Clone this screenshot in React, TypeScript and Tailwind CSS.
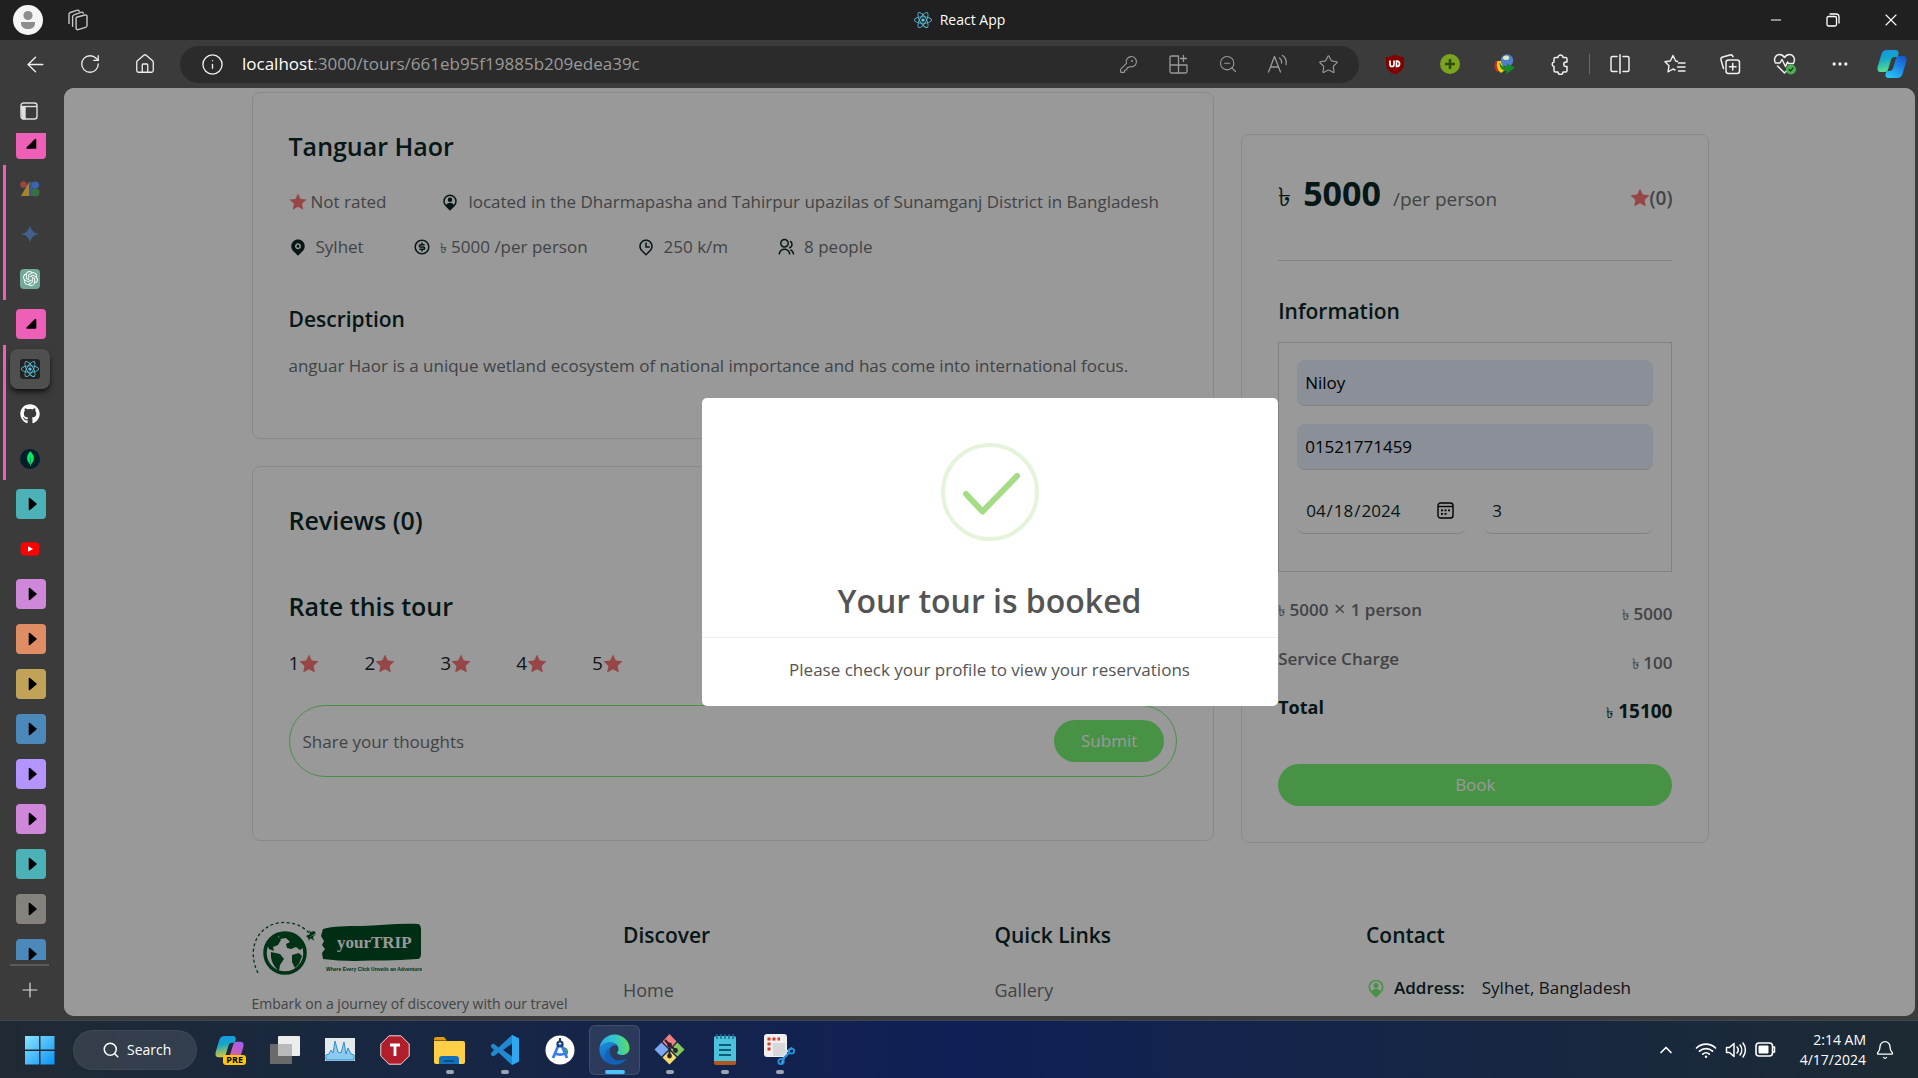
import type { ReactNode } from "react";
import { RiStarFill, RiMapPinFill, RiMoneyDollarCircleLine, RiMapPinTimeLine, RiGroupLine } from "react-icons/ri";
import { FaReact, FaGithub, FaYoutube } from "react-icons/fa";
import { SiOpenai, SiMongodb } from "react-icons/si";
import {
  ArrowLeft, RotateCw, House, Info, KeyRound, ZoomOut, Star, Ellipsis, Minus, X, Plus, Search, Bell, ChevronUp,
} from "lucide-react";

/* ---------- browser chrome ---------- */

function IconButton({ label, className = "", children }: { label: string; className?: string; children: ReactNode }) {
  return (
    <button type="button" aria-label={label} className={`flex h-9 shrink-0 items-center justify-center ${className}`}>
      {children}
    </button>
  );
}

const line = { fill: "none", stroke: "currentColor", strokeLinecap: "round", strokeLinejoin: "round" } as const;

function WorkspacesIcon() {
  return (
    <svg width="22" height="22" viewBox="0 0 22 22" {...line} strokeWidth="1.4">
      <path d="M9.5 8.2 18 6a1.4 1.4 0 0 1 2 1.3v9.2a2 2 0 0 1-1.4 1.8L11 20.6a1.4 1.4 0 0 1-1.9-1.3v-9a2 2 0 0 1 .4-2.1Z" />
      <path d="M5.6 17.2V7.6A2 2 0 0 1 7 5.8L14.600 3.200a1.300 1.300 0 0 1 1.700 1" />
      <path d="M2 14.400V5.300A2 2 0 0 1 3.400 3.500L10.500 1.200a1.300 1.300 0 0 1 1.700 1" />
    </svg>
  );
}

function CopilotIcon({ size = 30, purple = false }: { size?: number; purple?: boolean }) {
  const id = purple ? "cpB" : "cpA";
  return (
    <svg width={size} height={size} viewBox="0 0 30 30">
      <defs>
        <linearGradient id={`${id}l`} x1="0" y1="0" x2="0.200" y2="1">
          <stop offset="0" stopColor="#1b8fe8" />
          <stop offset="0.450" stopColor="#12a9c9" />
          <stop offset="1" stopColor={purple ? "#d8c53a" : "#5fdc8f"} />
        </linearGradient>
        <linearGradient id={`${id}r`} x1="0.800" y1="0" x2="0.200" y2="1">
          <stop offset="0" stopColor={purple ? "#a55cf0" : "#1557d6"} />
          <stop offset="1" stopColor={purple ? "#f4607a" : "#27c5f5"} />
        </linearGradient>
      </defs>
      <path d="M10 1h8.500c2.500 0 3.500 2 3 4l-1 3h-3c-2 0-3 1-3.600 3l-2.700 9c-.6 2-1.700 3-3.700 3H4c-3 0-4-2-3.400-5L4.500 5C5.300 2.300 7 1 10 1Z" fill={`url(#${id}l)`} />
      <path d="M20 29h-8.500c-2.500 0-3.500-2-3-4l1-3h3c2 0 3-1 3.600-3l2.700-9c.6-2 1.700-3 3.700-3H26c3 0 4 2 3.400 5L25.500 25c-.8 2.700-2.500 4-5.500 4Z" fill={`url(#${id}r)`} />
    </svg>
  );
}

function TitleBar() {
  return (
    <header className="flex h-10 shrink-0 items-center bg-[#202020] pl-[13px] text-white">
      <div className="flex flex-1 items-center gap-6">
        <button type="button" aria-label="Profile" className="size-[30px] rounded-full bg-[#f5f5f5]">
          <svg viewBox="0 0 30 30" fill="#8d8d8d">
            <circle cx="15" cy="10.500" r="4.600" />
            <path d="M8 17h14v1.500c0 3.500-3 5.500-7 5.500s-7-2-7-5.500Z" />
          </svg>
        </button>
        <button type="button" aria-label="Workspaces" className="text-[#c8c8c8]"><WorkspacesIcon /></button>
      </div>
      <div className="flex items-center gap-2 pr-3 text-[14px] leading-5">
        <FaReact size={18} color="#61c9e8" />
        <span>React App</span>
      </div>
      <div className="flex flex-1 items-center justify-end">
        <IconButton label="Minimize" className="w-[52px]"><Minus size={16} strokeWidth={1.5} /></IconButton>
        <IconButton label="Restore" className="w-[62px]">
          <svg width="14" height="14" viewBox="0 0 14 14" {...line} strokeWidth="1.300">
            <rect x="1" y="3.500" width="9.500" height="9.500" rx="1.500" />
            <path d="M4 1h6a3 3 0 0 1 3 3v6" />
          </svg>
        </IconButton>
        <IconButton label="Close" className="w-[54px]"><X size={20} strokeWidth={1.3} /></IconButton>
      </div>
    </header>
  );
}

function Toolbar() {
  return (
    <div className="flex h-12 shrink-0 items-center bg-[#3b3b3b] pr-px pl-2 text-[#f0f0f0]">
      <IconButton label="Back" className="w-[54px]"><ArrowLeft size={25} strokeWidth={1.3} /></IconButton>
      <IconButton label="Refresh" className="w-[55px]"><RotateCw size={22} strokeWidth={1.4} /></IconButton>
      <IconButton label="Home" className="w-[55px]"><House size={22} strokeWidth={1.4} /></IconButton>
      <div className="ml-2 flex h-[37px] flex-1 items-center rounded-full bg-[#2b2b2b] pr-[6px] pl-[21px]">
        <Info size={23} strokeWidth={1.4} />
        <p className="ml-[18px] flex-1 text-[17px] leading-6 text-[#9a9a9a]">
          <span className="text-white">localhost</span>:3000/tours/661eb95f19885b209edea39c
        </p>
        <div className="flex items-center text-[#9a9a9a]">
          <IconButton label="Saved password" className="w-[50px]"><KeyRound size={19} strokeWidth={1.4} /></IconButton>
          <IconButton label="Install app" className="w-[50px]">
            <svg width="21" height="21" viewBox="0 0 21 21" {...line} strokeWidth="1.300">
              <path d="M10 2H3.500A1.500 1.500 0 0 0 2 3.500v14A1.500 1.500 0 0 0 3.500 19h14a1.500 1.500 0 0 0 1.500-1.500V11H2M10.500 2v17M15.500 1.500v6M12.500 4.500h6" />
            </svg>
          </IconButton>
          <IconButton label="Zoom out" className="w-[50px]"><ZoomOut size={20} strokeWidth={1.3} /></IconButton>
          <IconButton label="Read aloud" className="w-[50px]">
            <svg width="22" height="20" viewBox="0 0 22 20" {...line} strokeWidth="1.300">
              <path d="m1.500 18 6-15.500 6 15.500M3.600 13h7.800M12.500 4a5 5 0 0 1 2 5M15.500 1.500a9 9 0 0 1 3.500 9" />
            </svg>
          </IconButton>
          <IconButton label="Add to favourites" className="w-[50px]"><Star size={21} strokeWidth={1.300} /></IconButton>
        </div>
      </div>
      <div className="ml-2 flex items-center">
        <IconButton label="uBlock Origin" className="w-[55px]">
          <svg width="20" height="21" viewBox="0 0 20 21">
            <path d="M10 .5c2.500 1.700 5.500 2.500 9 2.500v7c0 5-4 8.500-9 10.500C5 18.500 1 15 1 10V3c3.500 0 6.500-.8 9-2.500Z" fill="#800000" />
            <path d="M5 6.500v4a2 2 0 0 0 4 0v-4M11.500 7v5.500h.8a2.800 2.800 0 0 0 0-5.500Z" fill="none" stroke="#fff" strokeWidth="1.700" />
          </svg>
        </IconButton>
        <IconButton label="Add extension" className="w-[55px]">
          <svg width="20" height="20" viewBox="0 0 20 20">
            <circle cx="10" cy="10" r="10" fill="#7ba41c" />
            <path d="M10 5v10M5 10h10" stroke="#2f4a08" strokeWidth="2.600" />
          </svg>
        </IconButton>
        <IconButton label="Download manager" className="w-[55px]">
          <svg width="22" height="20" viewBox="0 0 22 20">
            <path d="M2 7C0 10 0 15 3 18l3-2-2-8Z" fill="#d9261c" />
            <path d="M3.500 7C2 11 3 16 7 19l4-3-4-9Z" fill="#f3cf1b" />
            <circle cx="13" cy="6.500" r="6.200" fill="#4f7fc8" />
            <path d="M9 3c2-2 5-2 6 0s-1 3-3 3-4-1-3-3Z" fill="#dbe8c0" />
            <path d="M5.500 8c1.500 4 4 5.500 7.500 4.500V9.500l8 4L12.500 20v-3C8 17 5 13 5.500 8Z" fill="#1c8a26" />
          </svg>
        </IconButton>
        <IconButton label="Extensions" className="w-[55px]">
          <svg width="22" height="22" viewBox="0 0 22 22" {...line} strokeWidth="1.500">
            <path d="M6.500 4.500H9a2.500 2.500 0 1 1 5 0h2.500a1.500 1.500 0 0 1 1.500 1.500v3h-1a2.200 2.200 0 1 0 0 4.500h1v4a1.500 1.500 0 0 1-1.500 1.500H14a2.500 2.500 0 0 1-5 0H6.500A1.500 1.500 0 0 1 5 17.500v-4a2.300 2.300 0 0 1 0-4.500V6a1.500 1.500 0 0 1 1.500-1.500Z" />
          </svg>
        </IconButton>
        <div className="mx-[2px] h-5 w-px bg-[#6a6a6a]" />
        <IconButton label="Split screen" className="w-[55px]">
          <svg width="22" height="20" viewBox="0 0 22 20" {...line} strokeWidth="1.500">
            <path d="M8 2.500H3.500A1.500 1.500 0 0 0 2 4v12a1.500 1.500 0 0 0 1.500 1.500H8M14 2.500h4.500A1.500 1.500 0 0 1 20 4v12a1.500 1.500 0 0 1-1.500 1.500H14M11 .8v18.400" />
          </svg>
        </IconButton>
        <IconButton label="Favourites" className="w-[55px]">
          <svg width="22" height="20" viewBox="0 0 22 20" {...line} strokeWidth="1.400">
            <path d="M13.500 7.500 11.700 7 9 1.500 6.300 7 1 7.800l4 4-1 6L9 15l2 1M14.500 9h6.500M13.500 13h7.500M14.500 17h6.500" />
          </svg>
        </IconButton>
        <IconButton label="Collections" className="w-[55px]">
          <svg width="22" height="22" viewBox="0 0 22 22" {...line} strokeWidth="1.500">
            <rect x="7" y="7" width="13.500" height="13.500" rx="2.500" />
            <path d="M13.700 10.500v6.500M10.500 13.700h6.500M4.500 15.500 2 7a2.500 2.500 0 0 1 1.700-3L11 2a2.500 2.500 0 0 1 3 1.700" />
          </svg>
        </IconButton>
        <IconButton label="Browser essentials" className="w-[55px]">
          <svg width="24" height="22" viewBox="0 0 24 22" {...line} strokeWidth="1.500">
            <path d="M2.500 10C0 5.500 3 1.500 6.500 1.500c2.500 0 4 1.500 5 3 1-1.500 2.500-3 5-3 3.500 0 6.500 4 4 8.500M4.500 13l7 7 2-2M2.500 10H7l2-3.500 3.500 7L14.500 9l1 1.500h5" />
            <circle cx="18" cy="16.500" r="5" fill="#4caf50" stroke="none" />
            <path d="m16 16.500 1.500 1.500 2.500-3" stroke="#1d3b1e" strokeWidth="1.200" />
          </svg>
        </IconButton>
        <IconButton label="Settings and more" className="w-[55px]"><Ellipsis size={20} strokeWidth={2} /></IconButton>
        <IconButton label="Copilot" className="w-[50px]"><CopilotIcon /></IconButton>
      </div>
    </div>
  );
}

/* ---------- vertical tabs ---------- */

function Slot({ children }: { children: ReactNode }) {
  return <div className="flex h-[45px] w-full shrink-0 items-center justify-center pr-[2px]">{children}</div>;
}

function GroupTile({ color, open = false }: { color: string; open?: boolean }) {
  return (
    <div className="flex h-[45px] w-full shrink-0 items-center justify-center">
      <button type="button" aria-label="Tab group" className={`flex size-[30px] items-center justify-center rounded-[4px] ${color}`}>
        <svg width="14" height="16" viewBox="0 0 14 16" fill="#000" stroke="#000" strokeWidth="1.600" strokeLinejoin="round">
          {open ? <path d="M11.500 3.500v8.500H3Z" /> : <path d="M5.500 2.500v11L12 8Z" />}
        </svg>
      </button>
    </div>
  );
}

function TabGroup({ children }: { children: ReactNode }) {
  return (
    <div className="relative w-full shrink-0">
      <div className="absolute inset-y-0 left-[3px] w-[3px] -translate-y-px bg-[#ee5fb7]" />
      {children}
    </div>
  );
}

function TabStrip() {
  return (
    <nav aria-label="Tabs" className="flex w-16 shrink-0 flex-col bg-[#3b3b3b]">
      <div className="flex h-[45px] shrink-0 items-center justify-center pr-[6px]">
        <svg width="18" height="18" viewBox="0 0 18 18" fill="none" stroke="#dedede" strokeWidth="1.400">
          <rect x="1" y="1" width="16" height="16" rx="2.500" />
          <path d="M1 4.500h16" />
          <path d="M1.500 5h3.500v11.500H2.500z" fill="#dedede" />
        </svg>
      </div>
      <div className="flex min-h-0 flex-1 basis-0 flex-col overflow-hidden">
        <div className="-mt-3 flex flex-col pr-[2px]">
          <GroupTile color="bg-[#ee5fb7]" open />
          <TabGroup>
            <Slot>
              <svg width="20" height="16" viewBox="0 0 20 16">
                <circle cx="3.500" cy="3.500" r="3.200" fill="#9c4541" />
                <path d="M1 15 9 1v14Z" fill="#a8842c" />
                <path d="M9 1h5a3.500 3.500 0 0 1 2 6.500V15H9Z" fill="#34599c" />
                <circle cx="15.500" cy="4" r="3.500" fill="#3a64ad" />
                <circle cx="15.500" cy="11.500" r="4" fill="#39703f" />
              </svg>
            </Slot>
            <Slot>
              <svg width="18" height="18" viewBox="0 0 18 18">
                <path d="M9 0c.7 5 4 8.300 9 9-5 .7-8.300 4-9 9-.7-5-4-8.300-9-9 5-.7 8.300-4 9-9Z" fill="#40608e" />
              </svg>
            </Slot>
            <Slot>
              <span className="flex size-5 items-center justify-center rounded-[4px] bg-[#72a99a]"><SiOpenai size={15} color="#fff" /></span>
            </Slot>
          </TabGroup>
          <GroupTile color="bg-[#ee5fb7]" open />
          <TabGroup>
            <Slot>
              <span className="flex size-10 items-center justify-center rounded-lg bg-[#4f4f4f] shadow-md shadow-black/60">
                <span className="flex size-5 items-center justify-center rounded-[3px] bg-[#222]"><FaReact size={18} color="#61c9e8" /></span>
              </span>
            </Slot>
            <Slot><FaGithub size={20} color="#fff" /></Slot>
            <Slot>
              <span className="flex size-5 items-center justify-center rounded-full bg-[#001e2b]"><SiMongodb size={15} color="#00ed64" /></span>
            </Slot>
          </TabGroup>
          <GroupTile color="bg-[#4bb3b8]" />
          <Slot>
            <span className="relative flex items-center justify-center">
              <span className="absolute size-2 bg-white" />
              <FaYoutube size={20} color="#f00" className="relative" />
            </span>
          </Slot>
          <GroupTile color="bg-[#cf87da]" />
          <GroupTile color="bg-[#df8e64]" />
          <GroupTile color="bg-[#c0a356]" />
          <GroupTile color="bg-[#4a89ba]" />
          <GroupTile color="bg-[#b495ff]" />
          <GroupTile color="bg-[#cf87da]" />
          <GroupTile color="bg-[#4bb3b8]" />
          <GroupTile color="bg-[#85817d]" />
          <GroupTile color="bg-[#4a89ba]" />
        </div>
      </div>
      <div className="flex flex-col pr-[5px] pb-[6px]">
        <div className="mx-[10px] mt-1 h-[2px] bg-[#5a5a5a]" />
        <button type="button" aria-label="New tab" className="flex h-[48px] items-center justify-center text-[#dedede]">
          <Plus size={24} strokeWidth={1.200} />
        </button>
      </div>
    </nav>
  );
}

/* ---------- tour page ---------- */

const card = "rounded-lg border border-[#e5e5e5] px-9";
const heading = "font-semibold text-[#0b2727]";

function PinUserIcon({ size = 18 }: { size?: number }) {
  return (
    <svg width={size} height={size} viewBox="0 0 24 24" fill="currentColor">
      <path d="M17.084 15.812a7 7 0 1 0-10.168 0A5.996 5.996 0 0 1 12 13a5.996 5.996 0 0 1 5.084 2.812zM12 23.728l-6.364-6.364a9 9 0 1 1 12.728 0L12 23.728zM12 12a3 3 0 1 1 0-6 3 3 0 0 1 0 6z" />
    </svg>
  );
}

function Meta({ icon, children }: { icon: ReactNode; children: ReactNode }) {
  return (
    <span className="flex items-center gap-[9px]">
      <span className="text-[#0b2727]">{icon}</span>
      {children}
    </span>
  );
}

function Taka({ className = "text-[15px]" }: { className?: string }) {
  return <span className={`leading-none font-normal ${className}`}>৳</span>;
}

function TourInfo() {
  return (
    <section className={`${card} pt-[35px] pb-[58px] text-[17px] text-[#6e7074]`}>
      <h2 className={`${heading} text-[25px] leading-9`}>Tanguar Haor</h2>
      <div className="mt-[25px] flex h-[25px] items-center gap-[55px]">
        <span className="flex items-center gap-1"><RiStarFill size={18} color="#fa7575" />Not rated</span>
        <Meta icon={<PinUserIcon />}>
          located in the Dharmapasha and Tahirpur upazilas of Sunamganj District in Bangladesh
        </Meta>
      </div>
      <div className="mt-5 flex h-[25px] items-center gap-[49px]">
        <Meta icon={<RiMapPinFill size={18} />}>Sylhet</Meta>
        <Meta icon={<RiMoneyDollarCircleLine size={18} />}><span><Taka className="text-[14px]" /> 5000 /per person</span></Meta>
        <Meta icon={<RiMapPinTimeLine size={18} />}>250 k/m</Meta>
        <Meta icon={<RiGroupLine size={18} />}>8 people</Meta>
      </div>
      <h3 className={`${heading} mt-[46px] text-[21px] leading-7`}>Description</h3>
      <p className="mt-[19px] leading-7">
        anguar Haor is a unique wetland ecosystem of national importance and has come into international focus.
      </p>
    </section>
  );
}

function Reviews() {
  return (
    <section className={`${card} mt-[27px] pt-[35px] pb-[63px]`}>
      <h2 className={`${heading} text-[25px] leading-9`}>Reviews (0)</h2>
      <form>
        <h3 className={`${heading} mt-[50px] text-[25px] leading-9`}>Rate this tour</h3>
        <div className="mt-[26px] flex items-center gap-[45px] text-[19px] leading-[27px] text-[#212529]">
          {[1, 2, 3, 4, 5].map((n) => (
            <button type="button" key={n} aria-label={`${n} star`} className="flex items-center">
              {n}<RiStarFill size={20} color="#fa7575" />
            </button>
          ))}
        </div>
        <div className="mt-7 flex h-[72px] items-center rounded-full border border-[#78f375] pr-3 pl-[13px]">
          <input
            type="text" aria-label="Share your thoughts" placeholder="Share your thoughts"
            className="h-full min-w-0 flex-1 bg-transparent text-[17px] text-[#212529] outline-none placeholder:text-[#6e7074]"
          />
          <button type="submit" className="h-[42px] w-[110px] rounded-full bg-[#78f375] text-[17px] text-white">Submit</button>
        </div>
      </form>
    </section>
  );
}

const field = "h-[46px] w-full min-w-0 rounded-lg border-b border-[#d8d8d8] px-2 text-[17px] outline-none";

function Booking() {
  return (
    <aside className={`${card} mt-[42px] pt-9 pb-9`}>
      <div className="flex h-[54px] items-start justify-between">
        <p className="flex items-baseline gap-3 leading-[44px] text-[#0b2727]">
          <span className="flex items-baseline gap-3 text-[34px] font-bold"><Taka className="text-[26px]" />5000</span>
          <span className="text-[19px] text-[#6e7074]">/per person</span>
        </p>
        <span className="flex items-center text-[19px] leading-[54px] font-semibold text-[#6e7074]"><RiStarFill size={20} color="#fa7575" />(0)</span>
      </div>
      <form>
        <h3 className={`${heading} mt-[35px] border-t border-[#d8d8d8] pt-9 text-[21px] leading-7`}>Information</h3>
        <div className="mt-[17px] grid grid-cols-2 gap-[18px] border border-[#d8d8d8] px-[18px] pt-[17px] pb-[37px]">
          <input aria-label="Full name" type="text" defaultValue="Niloy" className={`${field} col-span-2 bg-[#e8f0fe] text-black`} />
          <input aria-label="Phone" type="tel" defaultValue="01521771459" className={`${field} col-span-2 bg-[#e8f0fe] text-black`} />
          <div className="relative">
            <input
              aria-label="Date" type="date" defaultValue="2024-04-18"
              className={`${field} text-[#0b2727] [&::-webkit-calendar-picker-indicator]:opacity-0 [&::-webkit-datetime-edit-fields-wrapper]:p-0`}
            />
            <svg className="pointer-events-none absolute top-[14px] right-3" width="17" height="17" viewBox="0 0 17 17" fill="none" stroke="#000" strokeWidth="1.400">
              <rect x="1" y="1" width="15" height="15" rx="2.500" />
              <path d="M1 4.500h15" />
              <path d="M4 8.300h2m1.500 0h2m1.500 0h2M4 11.800h2m1.500 0h2" strokeWidth="1.800" />
            </svg>
          </div>
          <input aria-label="Guests" type="text" inputMode="numeric" defaultValue="3" className={`${field} text-[#0b2727]`} />
        </div>
      </form>
      <dl className="mt-[25px] flex flex-col gap-6 text-[17px] font-semibold text-[#6e7074]">
        <div className="flex h-[25px] justify-between leading-[25px]">
          <dt><Taka /> 5000 <span className="px-px text-[20px] leading-none font-normal">×</span> 1 person</dt>
          <dd className="pt-1"><Taka /> 5000</dd>
        </div>
        <div className="flex h-[25px] justify-between leading-[25px]">
          <dt>Service Charge</dt>
          <dd className="pt-1"><Taka /> 100</dd>
        </div>
        <div className="flex h-[25px] justify-between text-[19px] leading-[25px] font-bold text-[#0b2727]">
          <dt className="text-[18px]">Total</dt>
          <dd className="pt-1"><Taka /> 15100</dd>
        </div>
      </dl>
      <button type="button" className="mt-11 h-[42px] w-full rounded-full bg-[#78f375] text-[17px] text-white">Book</button>
    </aside>
  );
}

function Logo() {
  return (
    <svg role="img" aria-label="yourTRIP" width="170" height="54" viewBox="0 0 170 54">
      <path d="M6 52C-4 32 2 10 22 3c13-4 27 0 35 9" fill="none" stroke="#005426" strokeWidth="1.300" strokeDasharray="3 2.500" />
      <path d="m56 17 8-5-2-2-3 1-2-2 1 4-4 2 2 2 1 3 1-3Zm0 0 4 1 2 2-1-4 3-3" fill="#005426" />
      <circle cx="33" cy="32" r="20" fill="#fff" stroke="#005426" strokeWidth="3.500" />
      <path d="M33 12c9 0 17 6 19 14l-4 3-4-3-5 2-4-1-1-4 4-2-4-4-6 1-2-5 7-1ZM15 23c2-4 6-8 10-9l4 5-3 5-5 2 1 4-5-2ZM19 31l9 2 4 5-4 6-1 6c-5-4-9-11-8-19Zm21 3 7-2 3 3-3 8-4 4-3-6Z" fill="#005426" />
      <path d="M71 8c10-3 24-3 38-3 18 0 36-3 57-2 2 0 3 3 3 6v23c0 4-1 6-4 6-22 2-42 1-62 2-12 0-22-1-32-2l-1-6 3-4-3-4 2-4-3-5Z" fill="#004d22" />
      <text x="85" y="27" fontFamily="'Liberation Serif', serif" fontWeight="700" fontSize="17" fill="#fff">yourTRIP</text>
      <text x="74" y="50" fontFamily="'Liberation Sans', sans-serif" fontWeight="700" fontSize="5" fill="#005426">Where Every Click Unveils an Adventure</text>
    </svg>
  );
}

function Footer() {
  const title = `${heading} text-[21px] leading-7`;
  return (
    <footer className="mt-[78px] flex">
      <div className="w-1/4 px-[14px]">
        <Logo />
        <p className="mt-[19px] text-[14px] leading-5 text-[#6e7074]">Embark on a journey of discovery with our travel</p>
      </div>
      <div className="w-1/4 px-[14px]">
        <h4 className={title}>Discover</h4>
        <a href="#home" className="mt-[27px] block text-[18px] leading-7 text-[#6e7074]">Home</a>
      </div>
      <div className="w-1/4 px-[14px]">
        <h4 className={title}>Quick Links</h4>
        <a href="#gallery" className="mt-[27px] block text-[18px] leading-7 text-[#6e7074]">Gallery</a>
      </div>
      <div className="w-1/4 px-[14px]">
        <h4 className={title}>Contact</h4>
        <p className="mt-[25px] flex items-center text-[17px] leading-7 text-[#212529]">
          <span className="text-[#78f375]"><PinUserIcon size={20} /></span>
          <span className="ml-2 font-semibold text-[#0b2727]">Address:</span>
          <span className="ml-[17px]">Sylhet, Bangladesh</span>
        </p>
      </div>
    </footer>
  );
}

function BookedDialog() {
  return (
    <div className="absolute inset-0 flex items-center justify-center bg-black/40">
      <div role="dialog" aria-labelledby="booked-title" className="w-full max-w-[576px] rounded-[5px] bg-white pt-[45px] text-center text-[#545454]">
        <svg className="mx-auto" width="98" height="98" viewBox="0 0 98 98" fill="none">
          <circle cx="49" cy="49" r="47" stroke="#a5dc86" strokeOpacity="0.300" strokeWidth="4" />
          <path d="m25 51 16.500 17.500L76 33" stroke="#a5dc86" strokeWidth="6" strokeLinecap="round" strokeLinejoin="round" />
        </svg>
        <h2 id="booked-title" className="mt-10 border-b border-[#eee] pb-4 text-[32px] leading-10 font-semibold">Your tour is booked</h2>
        <p className="pt-5 pb-6 text-[17px] leading-6">Please check your profile to view your reservations</p>
      </div>
    </div>
  );
}

function TourPage() {
  return (
    <main className="relative mr-[3px] mb-1 flex-1 overflow-hidden rounded-[10px] bg-white">
      <div className="h-full overflow-hidden pt-1 pr-[18px]">
        <div className="mx-auto max-w-[1486px]">
          <div className="flex items-start">
            <div className="w-2/3 px-[14px]">
              <TourInfo />
              <Reviews />
            </div>
            <div className="w-1/3 pr-[14px] pl-[13px]">
              <Booking />
            </div>
          </div>
          <Footer />
        </div>
      </div>
      <BookedDialog />
    </main>
  );
}

/* ---------- taskbar ---------- */

function TaskItem({ label, state = "idle", children }: { label: string; state?: "idle" | "running" | "active"; children: ReactNode }) {
  return (
    <button
      type="button" aria-label={label}
      className={`relative mx-[2px] flex h-[50px] w-[51px] items-center justify-center rounded-md border ${state === "active" ? "border-white/10 bg-white/10" : "border-transparent"}`}
    >
      {children}
      {state === "running" && <span className="absolute bottom-0 h-1 w-2 rounded-full bg-[#9ea4b2]" />}
      {state === "active" && <span className="absolute bottom-0 h-1 w-5 rounded-full bg-[#4cc2ff]" />}
    </button>
  );
}

function Taskbar() {
  return (
    <footer className="flex h-[58px] shrink-0 items-center border-t border-[#3c4656] bg-linear-to-r from-[#1f2a33] via-[#101f55] to-[#1d2a33] pr-[23px] pl-3 text-white">
      <TaskItem label="Start">
        <svg width="30" height="30" viewBox="0 0 30 30">
          <defs>
            <linearGradient id="win" x1="0" y1="0" x2="1" y2="1"><stop stopColor="#8be4ff" /><stop offset="1" stopColor="#0a93f5" /></linearGradient>
          </defs>
          <path d="M0 1h14v13.500H0zM15.500 1h14v13.500h-14zM0 16h14v13.500H0zM15.500 16h14v13.500h-14z" fill="url(#win)" />
        </svg>
      </TaskItem>
      <button type="button" className="mr-[5px] ml-[6px] flex h-10 w-[124px] items-center gap-[7px] rounded-full border border-white/5 bg-white/10 pl-7 text-[14px]">
        <Search size={18} strokeWidth={2} />Search
      </button>
      <TaskItem label="Copilot preview">
        <span className="relative">
          <CopilotIcon size={29} purple />
          <span className="absolute -right-[2px] -bottom-[1px] rounded-[3px] bg-[#fdc60b] px-[3px] text-[9px] leading-[10px] font-bold text-black">PRE</span>
        </span>
      </TaskItem>
      <TaskItem label="Task view">
        <svg width="30" height="28" viewBox="0 0 30 28">
          <rect x="8" y="0" width="22" height="20" rx="1" fill="#ededed" />
          <rect x="0" y="8" width="22" height="20" rx="1" fill="#6a6a6a" />
          <path d="M8 8h14v12H8z" fill="#b9b9b9" />
        </svg>
      </TaskItem>
      <TaskItem label="Resource monitor">
        <svg width="30" height="23" viewBox="0 0 30 23">
          <rect width="30" height="23" fill="#e4e9ee" />
          <path d="M1 22v-5l3-1 2-4 2 3 2-12 3 11 3 1 3-11 2 12 2-6 3 6 3 1v5Z" fill="#8ccbf0" stroke="#2f8fc8" />
        </svg>
      </TaskItem>
      <TaskItem label="Thorium">
        <svg width="30" height="30" viewBox="0 0 30 30">
          <path d="M9 .8h12L29.200 9v12L21 29.200H9L.8 21V9Z" fill="#b01e2c" stroke="#f1d7d9" />
          <path d="M10 10h10M15 10v11" stroke="#fff" strokeWidth="2.800" />
        </svg>
      </TaskItem>
      <TaskItem label="File Explorer" state="running">
        <svg width="31" height="28" viewBox="0 0 31 28">
          <path d="M0 3a2 2 0 0 1 2-2h8l3 3.500H0Z" fill="#e09a10" />
          <path d="M0 5h29a2 2 0 0 1 2 2v19a2 2 0 0 1-2 2H2a2 2 0 0 1-2-2Z" fill="#ffcf48" />
          <path d="M5 28v-5a3 3 0 0 1 3-3h14a3 3 0 0 1 3 3v5Z" fill="#1272bd" />
          <path d="M10 25h10" stroke="#0b4f8a" strokeWidth="2" />
        </svg>
      </TaskItem>
      <TaskItem label="Visual Studio Code" state="running">
        <svg width="30" height="30" viewBox="0 0 30 30">
          <path d="m22 0 7 3.500v23L22 30 8.500 17.500 3.500 21.500 1 20V18l3-3-3-3v-2l2.500-1.500 5 4Zm0 8.500L13 15l9 6.500Z" fill="#1f8ad2" fillRule="evenodd" />
          <path d="m22 0 7 3.500v23L22 30Z" fill="#2ea8f0" />
        </svg>
      </TaskItem>
      <TaskItem label="Android Studio">
        <svg width="30" height="30" viewBox="0 0 30 30">
          <circle cx="15" cy="15" r="14.500" fill="#fff" />
          <path d="M19 12a5 5 0 0 1 3 8l-3-2Z" fill="#37a055" />
          <path d="m14 9-6 14M16 9l6 14M9.500 18.500c4 1.500 7 1.500 11 0" fill="none" stroke="#3b7ded" strokeWidth="2.800" />
          <circle cx="15" cy="9" r="2.600" fill="none" stroke="#163a6b" strokeWidth="2" />
          <path d="M15 3v4" stroke="#163a6b" strokeWidth="2" />
        </svg>
      </TaskItem>
      <TaskItem label="Microsoft Edge" state="active">
        <svg width="31" height="31" viewBox="0 0 31 31">
          <defs>
            <linearGradient id="edgeTop" x1="0" y1="0.500" x2="1" y2="0.400"><stop stopColor="#2aa6e8" /><stop offset="0.500" stopColor="#2fc6cf" /><stop offset="1" stopColor="#60dd5c" /></linearGradient>
            <linearGradient id="edgeLow" x1="0" y1="0" x2="0.600" y2="1"><stop stopColor="#1d8fe0" /><stop offset="1" stopColor="#0d56a8" /></linearGradient>
          </defs>
          <path d="M.5 14C1.500 6 8 .5 15.500.5 24 .5 30.500 7 30.500 14c0 4.500-3.500 7-7.500 7-3 0-5-1.200-5-2.200 0-.8 1.500-1.300 1.500-4 0-3-3-6.300-8-6.300C6.500 8.500 2.500 11 .5 14Z" fill="url(#edgeTop)" />
          <path d="M.5 14C2 10.500 6 8.500 11 8.500c3 0 5.500 1.200 7 3-5-1.500-7.500 2.500-7.500 6 0 6 6 9.500 11 9 3-.3 5-1.500 6.500-2.500-3 4.500-7.500 6.500-12.500 6.500C7 30.500-.5 24 .5 14Z" fill="url(#edgeLow)" />
          <path d="M11.500 30C5 27 4.500 17 12.500 12c-3 3-2.500 8 .5 11.500 4 4.500 11 4 15 .8-4 6-10 7.200-16.500 5.700Z" fill="#1560b8" />
        </svg>
      </TaskItem>
      <TaskItem label="Git" state="running">
        <svg width="31" height="31" viewBox="0 0 31 31">
          <path d="m15.500 0 7 7.500-7 7.500-7-7.500Z" fill="#f08080" />
          <path d="m7.500 8.500 7 7-7 7-7-7Z" fill="#7ba9f0" />
          <path d="m23.500 8.500 7 7-7 7-7-7Z" fill="#84c65a" />
          <path d="m15.500 16.500 7 7-7 7-7-7Z" fill="#f3dc6b" />
          <path d="m11 6 4.500 5v12M15.500 11l6 5" stroke="#2b2035" strokeWidth="2" fill="none" />
          <circle cx="15.500" cy="11" r="2.400" fill="#2b2035" /><circle cx="21.500" cy="16.500" r="2.400" fill="#2b2035" /><circle cx="15.500" cy="22" r="2.400" fill="#2b2035" />
        </svg>
      </TaskItem>
      <TaskItem label="Notepad" state="running">
        <svg width="24" height="31" viewBox="0 0 24 31">
          <rect x="1" y="2" width="22" height="27" rx="2" fill="#4cc3dc" />
          <path d="M1 27h22v2a2 2 0 0 1-2 2H3a2 2 0 0 1-2-2Z" fill="#b5571c" />
          <path d="M4 0v5M8 0v5M12 0v5M16 0v5M20 0v5" stroke="#1d6f8c" strokeWidth="1.500" />
          <path d="M6 11h12M6 16h12M6 21h12" stroke="#0d5a78" strokeWidth="2" />
        </svg>
      </TaskItem>
      <TaskItem label="Snipping Tool" state="running">
        <svg width="31" height="31" viewBox="0 0 31 31">
          <rect width="23" height="23" rx="3" fill="#efefef" />
          <path d="M3.500 5H16M5 8.500v10" stroke="#d8382b" strokeWidth="3" strokeDasharray="3 2" />
          <path d="M9 9h12v13H9Z" fill="#d5d7db" />
          <path d="M28 14 16 22M18 30l4-14" stroke="#d7dde4" strokeWidth="2" />
          <g fill="none" stroke="#1f8fd8" strokeWidth="2"><circle cx="27.500" cy="17" r="2.600" /><circle cx="17" cy="27.500" r="2.600" /></g>
          <path d="m19 25 6-6" stroke="#1f8fd8" strokeWidth="2" />
        </svg>
      </TaskItem>
      <div className="ml-auto flex items-center">
        <button type="button" aria-label="Show hidden icons"><ChevronUp size={20} strokeWidth={2} /></button>
        <button type="button" aria-label="Network, volume and battery" className="ml-[19px] flex items-center gap-2">
          <svg width="22" height="18" viewBox="0 0 22 18" {...line} strokeWidth="1.700">
            <path d="M1.500 7a13.500 13.500 0 0 1 19 0M4.500 10.200a9.300 9.300 0 0 1 13 0M7.700 13.200a4.800 4.800 0 0 1 6.600 0" />
            <circle cx="11" cy="15.800" r="1.200" fill="currentColor" stroke="none" />
          </svg>
          <svg width="22" height="18" viewBox="0 0 22 18" {...line} strokeWidth="1.500">
            <path d="M1.500 6.500h3L9 2.500v13l-4.500-4h-3ZM12 6a4.500 4.500 0 0 1 0 6M15 4a8 8 0 0 1 0 10M18 2a11.500 11.500 0 0 1 0 14" />
          </svg>
          <svg width="21" height="15" viewBox="0 0 21 15">
            <rect x="1" y="1" width="16.500" height="13" rx="3" fill="none" stroke="#fff" strokeWidth="1.600" />
            <rect x="3.500" y="3.500" width="10" height="8" rx="1" fill="#fff" />
            <path d="M18 5h1.500v5H18" fill="none" stroke="#fff" strokeWidth="1.500" />
          </svg>
        </button>
        <p className="ml-6 text-right text-[14px] leading-5">2:14 AM<br />4/17/2024</p>
        <button type="button" aria-label="Notifications" className="ml-[9px]"><Bell size={20} strokeWidth={1.600} /></button>
      </div>
    </footer>
  );
}

export default function App() {
  return (
    <div className="flex h-screen flex-col overflow-hidden bg-[#3b3b3b] font-['Open_Sans','Noto_Sans',sans-serif]">
      <TitleBar />
      <Toolbar />
      <div className="flex min-h-0 flex-1">
        <TabStrip />
        <TourPage />
      </div>
      <Taskbar />
    </div>
  );
}
